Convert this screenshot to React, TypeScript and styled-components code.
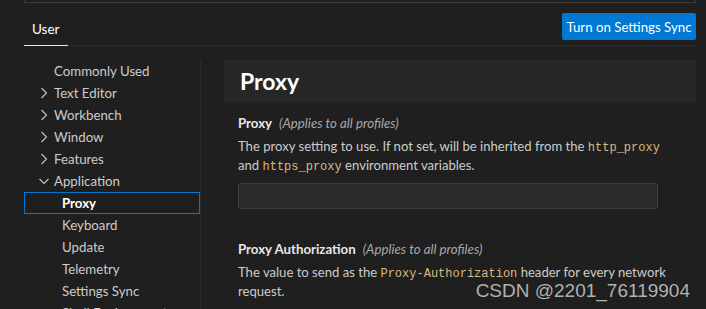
import React from "react";
import styled, { createGlobalStyle } from "styled-components";

const uiFont = `Lato, "Noto Sans", sans-serif`;
const codeFont = `"Liberation Mono", "DejaVu Sans Mono", monospace`;

const GlobalStyle = createGlobalStyle`
  html, body {
    margin: 0;
    padding: 0;
    background: #1f1f1f;
  }
  body {
    font-family: ${uiFont};
    color: #cccccc;
  }
`;

const Page = styled.div`
  position: relative;
  width: 706px;
  height: 309px;
  overflow: hidden;
  background: #1f1f1f;
  padding: 0 10px 0 24px;
  box-sizing: border-box;
`;

const SearchBoxEdge = styled.div`
  height: 2px;
  border: 1px solid #3c3c3c;
  border-top: none;
  background: #1f1f1f;
`;

const HeaderRow = styled.div`
  display: flex;
  align-items: flex-end;
  justify-content: space-between;
  height: 42px;
  border-bottom: 1px solid #2b2b2b;
`;

const Tab = styled.div<{ $active?: boolean }>`
  font-size: 13.5px;
  color: ${(p) => (p.$active ? "#ffffff" : "#9d9d9d")};
  padding: 0 8px 7px;
  border-bottom: 1px solid ${(p) => (p.$active ? "#e7e7e7" : "transparent")};
  margin-bottom: -1px;
  line-height: 18px;
`;

const SyncButton = styled.button`
  align-self: flex-start;
  margin-top: 10px;
  height: 27px;
  padding: 0 4px;
  width: 134px;
  border: none;
  border-radius: 2px;
  background: #0078d4;
  color: #ffffff;
  font-family: ${uiFont};
  font-size: 13.25px;
  white-space: nowrap;
`;

const Body = styled.div`
  display: flex;
  padding-top: 14px;
`;

const Sidebar = styled.nav`
  width: 176px;
  flex: none;
  border-right: 1px solid #2b2b2b;
  height: 260px;
`;

const TreeRow = styled.div<{ $level: number; $selected?: boolean }>`
  display: flex;
  align-items: center;
  height: 22px;
  box-sizing: border-box;
  padding-left: ${(p) => 11 + p.$level * 8}px;
  font-size: 13.25px;
  color: ${(p) => (p.$selected ? "#ffffff" : "#cccccc")};
  font-weight: ${(p) => (p.$selected ? 700 : 400)};
  border: 1px solid ${(p) => (p.$selected ? "#0078d4" : "transparent")};
`;

const Twistie = styled.span`
  width: 18px;
  height: 16px;
  flex: none;
  display: flex;
  align-items: center;
  justify-content: flex-start;
`;

const Content = styled.main`
  flex: 1;
  padding-left: 23px;
`;

const GroupHeader = styled.div`
  height: 42px;
  background: #262727;
  display: flex;
  align-items: center;
  padding-left: 16px;
  font-size: 23px;
  font-weight: 700;
  color: #ffffff;
`;

const SettingItem = styled.section<{ $top: number }>`
  padding: ${(p) => p.$top}px 14px 0 14px;
`;

const SettingTitle = styled.div`
  font-size: 13.25px;
  line-height: 18px;
  font-weight: 700;
  color: #e7e7e7;
  white-space: nowrap;
`;

const Scope = styled.span`
  font-weight: 400;
  font-style: italic;
  color: #a8a8a8;
  margin-left: 7px;
`;

const Description = styled.div`
  margin-top: 5px;
  font-size: 13.1px;
  line-height: 19px;
  color: #cccccc;
  white-space: nowrap;
`;

const Code = styled.code`
  font-family: ${codeFont};
  font-size: 12px;
  line-height: 1;
  color: #d7ba7d;
`;

const TextInput = styled.input`
  display: block;
  margin-top: 8px;
  width: 420px;
  height: 26px;
  box-sizing: border-box;
  background: #2a2a2a;
  border: 1px solid #3c3c3c;
  border-radius: 2px;
  outline: none;
`;

const Watermark = styled.div`
  position: absolute;
  right: 16px;
  bottom: 7px;
  font-family: "Liberation Sans", Arial, sans-serif;
  font-size: 19px;
  color: rgba(220, 220, 220, 0.78);
  white-space: nowrap;
  pointer-events: none;
`;

const Chevron = ({ open }: { open?: boolean }) => (
  <svg width="16" height="16" viewBox="0 0 16 16" fill="none">
    <path
      d={open ? "M3.5 6l4.5 4.5L12.5 6" : "M5.5 3l5 5-5 5"}
      stroke="#c5c5c5"
      strokeWidth="1.1"
    />
  </svg>
);

type Node = { label: string; level: number; twistie?: "open" | "closed"; selected?: boolean };

const tree: Node[] = [
  { label: "Commonly Used", level: 0 },
  { label: "Text Editor", level: 0, twistie: "closed" },
  { label: "Workbench", level: 0, twistie: "closed" },
  { label: "Window", level: 0, twistie: "closed" },
  { label: "Features", level: 0, twistie: "closed" },
  { label: "Application", level: 0, twistie: "open" },
  { label: "Proxy", level: 1, selected: true },
  { label: "Keyboard", level: 1 },
  { label: "Update", level: 1 },
  { label: "Telemetry", level: 1 },
  { label: "Settings Sync", level: 1 },
  { label: "Shell Environment", level: 1 },
];

export default function App() {
  return (
    <>
      <GlobalStyle />
      <Page>
        <SearchBoxEdge />
        <HeaderRow>
          <Tab $active>User</Tab>
          <SyncButton>Turn on Settings Sync</SyncButton>
        </HeaderRow>
        <Body>
          <Sidebar>
            {tree.map((n) => (
              <TreeRow key={n.label} $level={n.level} $selected={n.selected}>
                <Twistie>{n.twistie && <Chevron open={n.twistie === "open"} />}</Twistie>
                {n.label}
              </TreeRow>
            ))}
          </Sidebar>
          <Content>
            <GroupHeader>Proxy</GroupHeader>
            <SettingItem $top={12}>
              <SettingTitle>
                Proxy<Scope>(Applies to all profiles)</Scope>
              </SettingTitle>
              <Description>
                The proxy setting to use. If not set, will be inherited from the <Code>http_proxy</Code>
                <br />
                and <Code>https_proxy</Code> environment variables.
              </Description>
              <TextInput type="text" />
            </SettingItem>
            <SettingItem $top={31}>
              <SettingTitle>
                Proxy Authorization<Scope>(Applies to all profiles)</Scope>
              </SettingTitle>
              <Description>
                The value to send as the <Code>Proxy-Authorization</Code> header for every network
                <br />
                request.
              </Description>
            </SettingItem>
          </Content>
        </Body>
        <Watermark>CSDN @2201_76119904</Watermark>
      </Page>
    </>
  );
}
